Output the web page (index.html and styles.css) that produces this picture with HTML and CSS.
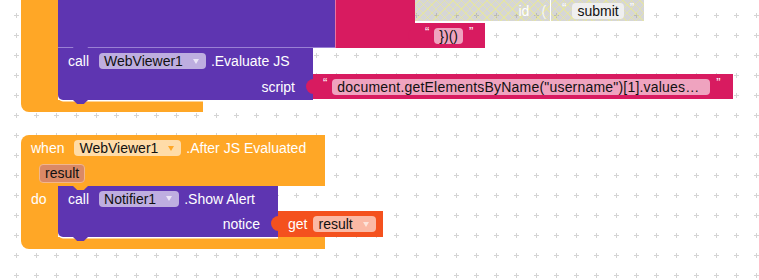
FILE: index.html
```html
<!DOCTYPE html>
<html lang="en">
<head>
    <meta charset="UTF-8">
    <meta name="viewport" content="width=device-width, initial-scale=1.0">
    <title>Blocks</title>
    <link rel="stylesheet" href="styles.css">
</head>
<body>
    <div class="workspace">
        <svg class="grid" width="759" height="280">
            <defs>
                <pattern id="cross" width="20" height="20" patternUnits="userSpaceOnUse">
                    <path d="M14 15.5h5M16.5 13v5" stroke="#d4d4d4" stroke-width="1"/>
                </pattern>
            </defs>
            <rect width="759" height="280" fill="url(#cross)"/>
        </svg>

        <!-- pilha que continua acima da area visivel -->
        <div class="stack stack-top">
            <div class="cblock">
                <div class="arm"></div>
                <div class="slot">
                    <div class="blk-row">
                        <div class="body purple-body">
                            <svg class="seam" width="277" height="6"><path d="M0 .5H15l4 4h7l4-4H277"/></svg>
                        </div>
                        <div class="body join-body"></div>
                        <div class="hatch-col">
                            <div class="hatch">
                                <span class="id">id</span>
                                <span class="paren">(</span>
                                <span class="sep"></span>
                                <span class="q">“</span>
                                <span class="field plain">submit</span>
                                <span class="q">”</span>
                            </div>
                            <div class="value text-blk small">
                                <span class="q">“</span><span class="field">})()</span><span class="q">”</span>
                            </div>
                        </div>
                    </div>
                    <div class="stmt">
                        <div class="call call-eval">
                            <div class="line"><span class="kw">call</span><span class="field dd">WebViewer1</span><span class="dot">.Evaluate JS</span></div>
                            <div class="line input">script</div>
                        </div>
                        <div class="value text-blk script">
                            <span class="q">“</span><span class="field long">document.getElementsByName("username")[1].values…</span><span class="q">”</span>
                        </div>
                    </div>
                </div>
                <div class="bar"></div>
            </div>
        </div>

        <!-- evento When WebViewer1.AfterJSEvaluated -->
        <div class="stack stack-event">
            <div class="cblock">
                <div class="head">
                    <div class="line"><span class="kw">when</span><span class="field dd">WebViewer1</span><span class="dot">.After JS Evaluated</span></div>
                    <div class="line params"><span class="param">result</span></div>
                </div>
                <div class="arm"><span class="do">do</span></div>
                <div class="slot">
                    <div class="stmt">
                        <div class="call call-alert">
                            <div class="line"><span class="kw">call</span><span class="field dd">Notifier1</span><span class="dot">.Show Alert</span></div>
                            <div class="line input">notice</div>
                        </div>
                        <div class="value get"><span class="kw">get</span><span class="field dd">result</span></div>
                    </div>
                </div>
                <div class="bar"></div>
            </div>
        </div>
    </div>
</body>
</html>
```

FILE: styles.css
```css
body {
    margin: 0;
    font-family: "Liberation Sans", Arial, sans-serif;
    font-size: 14px;
    color: #fff;
}
.workspace {
    position: relative;
    width: 759px;
    height: 280px;
    overflow: hidden;
    background-color: #fff;
}
.grid {
    position: absolute;
    left: 0;
    top: 0;
}
/* pilhas de blocos no canvas */
.stack {
    position: absolute;
    left: 21px;
}
.stack-top {
    top: 0;
}
.stack-event {
    top: 135px;
}
.cblock {
    display: grid;
    grid-template-columns: 37px max-content;
    align-items: start;
}
.arm {
    background-color: #FFA726;
    align-self: stretch;
}
.do {
    display: block;
    padding-left: 10px;
    line-height: 26px;
}
.bar {
    grid-column: 1 / 3;
    height: 12px;
    background-color: #FFA726;
    border-bottom-left-radius: 8px;
}
.stack-top .bar {
    width: 182px;
}
.stack-event .bar {
    width: 304px;
}
.head {
    grid-column: 1 / 3;
    width: 304px;
    height: 51px;
    background-color: #FFA726;
    border-top-left-radius: 8px;
}
.head .line:first-child {
    height: 26px;
}
.params {
    padding-left: 18px !important;
}
.param {
    height: 17px;
    line-height: 17px;
    padding: 0 5px;
    background-color: #DA8966;
    border: 1px solid #F2B68C;
    border-radius: 4px;
    color: #111;
}
/* linhas internas */
.line {
    display: flex;
    align-items: center;
    height: 25px;
    padding-left: 10px;
    white-space: nowrap;
}
.kw {
    margin-right: 10px;
}
.dot {
    margin-left: 5px;
}
.input {
    justify-content: flex-end;
    padding-right: 18px;
}
.field {
    height: 16px;
    line-height: 16px;
    padding: 0 5px;
    border-radius: 4px;
    background-color: rgba(255, 255, 255, 0.6);
    color: #111;
    white-space: nowrap;
}
.dd {
    display: flex;
    align-items: center;
    padding-right: 7px;
}
.dd::after {
    content: "";
    margin-left: 10px;
    border-left: 3px solid transparent;
    border-right: 3px solid transparent;
    border-top: 5px solid #ebe5f7;
}
.head .dd::after {
    border-top-color: #FFA726;
}
.get .dd::after {
    border-top-color: #fde4da;
}
/* bloco de cima, cortado */
.blk-row {
    display: flex;
    align-items: flex-start;
}
.body {
    height: 48px;
}
.purple-body {
    position: relative;
    width: 277px;
    background-color: #5E35B1;
}
.seam {
    position: absolute;
    left: 0;
    top: 47px;
    overflow: visible;
}
.seam path {
    fill: none;
    stroke: #9a80d4;
    stroke-width: 1;
}
.join-body {
    width: 79px;
    background-color: #D81B60;
    border-left: 1px solid #e873a0;
}
.hatch-col {
    width: 229px;
}
.hatch {
    display: flex;
    align-items: center;
    justify-content: flex-end;
    height: 21px;
    padding-right: 10px;
    background-color: rgba(130, 130, 130, 0.33);
    background-image:
        repeating-linear-gradient(45deg, transparent 0 5px, rgba(236, 236, 140, 0.55) 5px 6px),
        repeating-linear-gradient(-45deg, transparent 0 5px, rgba(236, 236, 140, 0.55) 5px 6px);
}
.paren {
    margin-left: 12px;
    color: rgba(255, 255, 255, 0.8);
}
.sep {
    width: 1px;
    height: 21px;
    margin-left: 4px;
    margin-right: 11px;
    background-color: #fff;
}
.hatch .q {
    margin: 0 6px 0 0;
}
.hatch .field + .q {
    margin: 0 0 0 6px;
}
.field.plain {
    background-color: #efefef;
}
/* blocos de valor */
.value {
    position: relative;
    display: flex;
    align-items: center;
    height: 25px;
}
.value::before {
    content: "";
    position: absolute;
    left: -7px;
    top: 5px;
    width: 8px;
    height: 15px;
    border-radius: 8px 0 0 8px;
    background-color: inherit;
}
.text-blk {
    background-color: #D81B60;
    padding: 0 10px 0 10px;
}
.q {
    align-self: flex-start;
    margin-top: 1px;
    font-size: 13px;
    line-height: 16px;
}
.text-blk .q:first-child {
    margin-right: 5px;
}
.text-blk .field + .q {
    margin-left: 6px;
}
.small {
    width: 50px;
    margin-top: 2px;
}
.script {
    width: 400px;
    margin-bottom: 1px;
}
.field.long {
    width: 368px;
    letter-spacing: 0.2px;
}
.get {
    height: 26px;
    padding: 0 7px 0 10px;
    background-color: #F4511E;
}
.get .kw {
    margin-right: 6px;
}
/* blocos de chamada */
.stmt {
    display: flex;
    align-items: flex-end;
}
.call {
    position: relative;
    background-color: #5E35B1;
    border-bottom-left-radius: 5px;
    box-shadow: 0 1.5px 0 #fff;
}
.call .line {
    height: 26px;
}
.call::after {
    content: "";
    position: absolute;
    left: 15px;
    bottom: -4px;
    width: 15px;
    height: 4px;
    background-color: #5E35B1;
    clip-path: polygon(0 0, 100% 0, 72% 100%, 28% 100%);
}
.call-eval {
    width: 255px;
}
.call-alert {
    width: 220px;
}
.call-alert .line:first-child {
    height: 25px;
}
.call-alert::before {
    content: "";
    position: absolute;
    left: 15px;
    top: 0;
    width: 15px;
    height: 4px;
    background-color: #FFA726;
    clip-path: polygon(0 0, 100% 0, 72% 100%, 28% 100%);
}
```
